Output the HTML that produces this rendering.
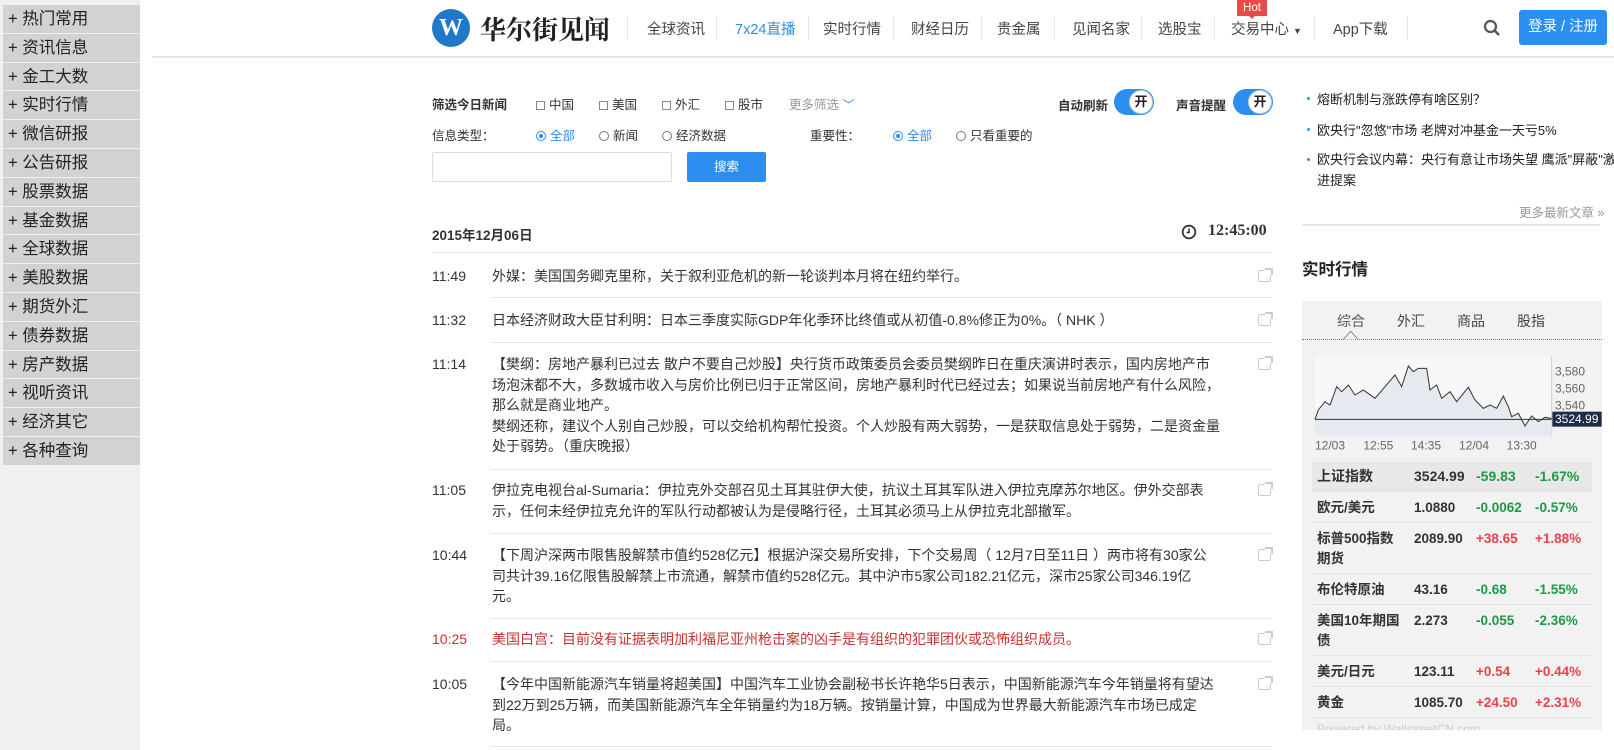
<!DOCTYPE html>
<html><head><meta charset="utf-8">
<style>
*{margin:0;padding:0;box-sizing:border-box}
body{width:1614px;height:750px;overflow:hidden;background:#fff;font-family:"Liberation Sans","Noto Sans CJK SC",sans-serif;color:#333;font-size:13.5px;position:relative}
.a{position:absolute;white-space:nowrap}
#side{position:absolute;left:0;top:0;width:140px;height:750px;background:#f0f0f0}
#side div{position:absolute;left:3px;width:137px;height:27.8px;background:#d2d2d2;font-size:16.5px;line-height:28px;padding-left:5px;color:#222}
.nav{position:absolute;top:18px;font-size:14.5px;color:#444}
.sep{position:absolute;top:16px;width:1px;height:24px;background:#e6e6e6}
.cb{display:inline-block;width:9px;height:9px;border:1px solid #888;margin-right:4px;vertical-align:-1px}
.rd{display:inline-block;width:10px;height:10px;border:1px solid #777;border-radius:50%;margin-right:4px;vertical-align:-1px;position:relative}
.rd.on{border-color:#2b8ef0}
.rd.on:after{content:"";position:absolute;left:2px;top:2px;width:4px;height:4px;border-radius:50%;background:#2b8ef0}
.tg{position:absolute;width:40px;height:26px;border-radius:13px;background:#2b8ef0}
.tg span{position:absolute;right:1px;top:1px;width:24px;height:24px;border-radius:50%;background:#fff;border:1px solid #ccc;font-size:13px;text-align:center;line-height:22px;color:#222;font-weight:bold}
.ni{position:absolute;left:432px;width:840px;line-height:20.6px;font-size:14px}
.ni .t{position:absolute;left:0;top:0}
.ni .c{position:absolute;left:60px;width:730px;white-space:normal}
.hl{position:absolute;left:491px;width:781px;height:1px;background:#e8e8e8}
.sh{position:absolute;left:1258px;width:13px;height:12px;border:1px solid #ccc;border-radius:2px}
.sh:after{content:"";position:absolute;right:-3px;top:-3px;width:6px;height:5px;border-top:2px solid #ccc;border-right:2px solid #ccc;background:#fff}
.rl{position:absolute;left:1317px;font-size:13px;color:#222}
.rl:before{content:"";position:absolute;left:-10px;top:8px;width:3px;height:3px;background:#3a8ee6;border-radius:50%}
.tr{position:absolute;left:1312px;width:280px;border-bottom:1px solid #e3e3e3;font-size:13.5px;font-weight:bold;color:#333;line-height:17px}
.tr span{position:absolute}
.g{color:#1d9a45}.r{color:#e8434a}
</style></head><body>
<div id="side">
<div style="top:5px">+ 热门常用</div><div style="top:33.8px">+ 资讯信息</div><div style="top:62.6px">+ 金工大数</div><div style="top:91.4px">+ 实时行情</div><div style="top:120.2px">+ 微信研报</div><div style="top:149px">+ 公告研报</div><div style="top:177.8px">+ 股票数据</div><div style="top:206.6px">+ 基金数据</div><div style="top:235.4px">+ 全球数据</div><div style="top:264.2px">+ 美股数据</div><div style="top:293px">+ 期货外汇</div><div style="top:321.8px">+ 债券数据</div><div style="top:350.6px">+ 房产数据</div><div style="top:379.4px">+ 视听资讯</div><div style="top:408.2px">+ 经济其它</div><div style="top:437px">+ 各种查询</div>
</div>
<div class="a" style="left:152px;top:56px;width:1462px;height:2px;background:#e6e6e6"></div>
<div class="a" style="left:432px;top:9px;width:38px;height:38px;border-radius:50%;background:#1f78c8;color:#fff;font-family:'Liberation Serif',serif;font-weight:bold;font-size:24px;text-align:center;line-height:38px">W</div>
<div class="a" style="left:480px;top:10px;font-family:'Liberation Serif','Noto Serif CJK SC',serif;font-weight:bold;font-size:26px;color:#222">华尔街见闻</div>
<div class="sep" style="left:627px"></div>
<div class="nav" style="left:647px">全球资讯</div><div class="sep" style="left:716px"></div>
<div class="nav" style="left:735px;color:#2e8ee6">7x24直播</div><div class="sep" style="left:808px"></div>
<div class="nav" style="left:823px">实时行情</div><div class="sep" style="left:893px"></div>
<div class="nav" style="left:911px">财经日历</div><div class="sep" style="left:981px"></div>
<div class="nav" style="left:997px">贵金属</div><div class="sep" style="left:1054px"></div>
<div class="nav" style="left:1072px">见闻名家</div><div class="sep" style="left:1141px"></div>
<div class="nav" style="left:1158px">选股宝</div><div class="sep" style="left:1214px"></div>
<div class="nav" style="left:1231px">交易中心 <span style="font-size:9px">▼</span></div><div class="sep" style="left:1314px"></div>
<div class="a" style="left:1237px;top:0;width:30px;height:16px;background:#e84a4a;color:#fff;font-size:11.5px;text-align:center;line-height:16px">Hot</div>
<div class="a" style="left:1248px;top:15px;border:4px solid transparent;border-top-color:#e84a4a"></div>
<div class="nav" style="left:1333px">App下载</div><div class="sep" style="left:1407px"></div>
<svg class="a" style="left:1483px;top:19px" width="18" height="18"><circle cx="7.5" cy="7.5" r="5.5" fill="none" stroke="#555" stroke-width="2.2"/><line x1="11.5" y1="11.5" x2="16" y2="16" stroke="#555" stroke-width="2.6"/></svg>
<div class="a" style="left:1519px;top:10px;width:88px;height:35px;background:#2b8ef0;border-radius:3px;color:#fff;font-size:14.5px;text-align:center;line-height:35px">登录 / 注册</div>
<div class="a" style="left:432px;top:94px;font-weight:bold;font-size:12.5px">筛选今日新闻</div>
<div class="a" style="left:536px;top:94px;font-size:12.5px"><i class="cb"></i>中国</div>
<div class="a" style="left:599px;top:94px;font-size:12.5px"><i class="cb"></i>美国</div>
<div class="a" style="left:662px;top:94px;font-size:12.5px"><i class="cb"></i>外汇</div>
<div class="a" style="left:725px;top:94px;font-size:12.5px"><i class="cb"></i>股市</div>
<div class="a" style="left:789px;top:94px;font-size:12.5px;color:#999">更多筛选 <span style="color:#2b8ef0;font-size:12px">﹀</span></div>
<div class="a" style="left:1058px;top:95px;font-weight:bold;font-size:12.5px">自动刷新</div>
<div class="tg" style="left:1114px;top:89px"><span>开</span></div>
<div class="a" style="left:1176px;top:95px;font-weight:bold;font-size:12.5px">声音提醒</div>
<div class="tg" style="left:1233px;top:89px"><span>开</span></div>
<div class="a" style="left:432px;top:125px;font-size:12.5px">信息类型：</div>
<div class="a" style="left:536px;top:125px;font-size:12.5px;color:#2b8ef0"><i class="rd on"></i>全部</div>
<div class="a" style="left:599px;top:125px;font-size:12.5px"><i class="rd"></i>新闻</div>
<div class="a" style="left:662px;top:125px;font-size:12.5px"><i class="rd"></i>经济数据</div>
<div class="a" style="left:810px;top:125px;font-size:12.5px">重要性：</div>
<div class="a" style="left:893px;top:125px;font-size:12.5px;color:#2b8ef0"><i class="rd on"></i>全部</div>
<div class="a" style="left:956px;top:125px;font-size:12.5px"><i class="rd"></i>只看重要的</div>
<div class="a" style="left:432px;top:152px;width:240px;height:30px;border:1px solid #ddd;border-radius:2px"></div>
<div class="a" style="left:687px;top:152px;width:79px;height:30px;background:#2b8ef0;border-radius:2px;color:#fff;font-size:12.5px;text-align:center;line-height:30px">搜索</div>
<div class="a" style="left:432px;top:224px;font-weight:bold;font-size:13.5px">2015年12月06日</div>
<svg class="a" style="left:1181px;top:224px" width="16" height="16"><circle cx="8" cy="8" r="6.3" fill="none" stroke="#333" stroke-width="1.8"/><path d="M8 4.5V8.5H5.5" fill="none" stroke="#333" stroke-width="1.6"/></svg>
<div class="a" style="left:1208px;top:222px;font-weight:bold;font-size:16px;font-family:'Liberation Serif',serif">12:45:00</div>
<div class="a" style="left:432px;top:252px;width:840px;height:1px;background:#e3e3e3"></div>
<div class="ni" style="top:266px"><span class="t">11:49</span><div class="c">外媒：美国国务卿克里称，关于叙利亚危机的新一轮谈判本月将在纽约举行。</div></div>
<div class="sh" style="top:270px"></div><div class="hl" style="top:297px"></div>
<div class="ni" style="top:310px"><span class="t">11:32</span><div class="c">日本经济财政大臣甘利明：日本三季度实际GDP年化季环比终值或从初值-0.8%修正为0%。（ NHK ）</div></div>
<div class="sh" style="top:314px"></div><div class="hl" style="top:342px"></div>
<div class="ni" style="top:354px"><span class="t">11:14</span><div class="c">【樊纲：房地产暴利已过去 散户不要自己炒股】央行货币政策委员会委员樊纲昨日在重庆演讲时表示，国内房地产市场泡沫都不大，多数城市收入与房价比例已归于正常区间，房地产暴利时代已经过去；如果说当前房地产有什么风险，那么就是商业地产。<br>樊纲还称，建议个人别自己炒股，可以交给机构帮忙投资。个人炒股有两大弱势，一是获取信息处于弱势，二是资金量处于弱势。（重庆晚报）</div></div>
<div class="sh" style="top:358px"></div><div class="hl" style="top:469px"></div>
<div class="ni" style="top:480px"><span class="t">11:05</span><div class="c">伊拉克电视台al-Sumaria：伊拉克外交部召见土耳其驻伊大使，抗议土耳其军队进入伊拉克摩苏尔地区。伊外交部表示，任何未经伊拉克允许的军队行动都被认为是侵略行径，土耳其必须马上从伊拉克北部撤军。</div></div>
<div class="sh" style="top:484px"></div><div class="hl" style="top:533px"></div>
<div class="ni" style="top:545px"><span class="t">10:44</span><div class="c">【下周沪深两市限售股解禁市值约528亿元】根据沪深交易所安排，下个交易周（ 12月7日至11日 ）两市将有30家公<br>司共计39.16亿限售股解禁上市流通，解禁市值约528亿元。其中沪市5家公司182.21亿元，深市25家公司346.19亿<br>元。</div></div>
<div class="sh" style="top:549px"></div><div class="hl" style="top:618px"></div>
<div class="ni" style="top:629px;color:#c8312f"><span class="t">10:25</span><div class="c">美国白宫：目前没有证据表明加利福尼亚州枪击案的凶手是有组织的犯罪团伙或恐怖组织成员。</div></div>
<div class="sh" style="top:633px"></div><div class="hl" style="top:661px"></div>
<div class="ni" style="top:674px"><span class="t">10:05</span><div class="c">【今年中国新能源汽车销量将超美国】中国汽车工业协会副秘书长许艳华5日表示，中国新能源汽车今年销量将有望达到22万到25万辆，而美国新能源汽车全年销量约为18万辆。按销量计算，中国成为世界最大新能源汽车市场已成定局。</div></div>
<div class="sh" style="top:678px"></div><div class="hl" style="top:746px"></div>
<div class="rl" style="top:89px">熔断机制与涨跌停有啥区别？</div>
<div class="rl" style="top:120px">欧央行"忽悠"市场 老牌对冲基金一天亏5%</div>
<div class="rl" style="top:150px;white-space:normal;width:300px;line-height:20.6px">欧央行会议内幕：央行有意让市场失望 鹰派"屏蔽"激进提案</div>
<div class="a" style="left:1519px;top:202px;font-size:12.5px;color:#999">更多最新文章 »</div>
<div class="a" style="left:1302px;top:224px;width:298px;height:2px;background:#e6e6e6"></div>
<div class="a" style="left:1302px;top:256px;font-size:16.5px;font-weight:bold;color:#222">实时行情</div>
<div class="a" style="left:1302px;top:301px;width:300px;height:429px;background:#f2f2f2"></div>
<div class="a" style="left:1337px;top:311px;font-size:14px;color:#555">综合</div>
<div class="a" style="left:1397px;top:311px;font-size:14px;color:#444">外汇</div>
<div class="a" style="left:1457px;top:311px;font-size:14px;color:#444">商品</div>
<div class="a" style="left:1517px;top:311px;font-size:14px;color:#444">股指</div>
<div class="a" style="left:1302px;top:339px;width:300px;border-top:1px dotted #777"></div>
<svg class="a" style="left:1250px;top:280px" width="364" height="470" viewBox="0 0 1092 1410">
<path d="M280 178 L302 154 L324 178" fill="#f2f2f2" stroke="#888" stroke-width="3"/>
<rect x="195" y="230" width="710" height="240" fill="#f8f8f8"/>
<line x1="905" y1="230" x2="905" y2="470" stroke="#ccc" stroke-width="3"/>
<path d="M195 418 L205 390 L225 365 L240 375 L260 320 L275 335 L295 315 L315 345 L340 330 L375 355 L405 320 L435 285 L455 320 L475 258 L490 275 L505 265 L530 265 L540 330 L560 315 L575 355 L600 335 L620 365 L655 322 L675 360 L700 385 L720 375 L740 385 L760 348 L775 380 L785 410 L805 400 L825 438 L845 408 L865 425 L885 412 L905 415 L905 470 L195 470Z" fill="#e6e9f0"/>
<path d="M195 418 L205 390 L225 365 L240 375 L260 320 L275 335 L295 315 L315 345 L340 330 L375 355 L405 320 L435 285 L455 320 L475 258 L490 275 L505 265 L530 265 L540 330 L560 315 L575 355 L600 335 L620 365 L655 322 L675 360 L700 385 L720 375 L740 385 L760 348 L775 380 L785 410 L805 400 L825 438 L845 408 L865 425 L885 412 L905 415" fill="none" stroke="#333" stroke-width="3"/>
<line x1="195" y1="418" x2="905" y2="418" stroke="#333" stroke-width="3"/>
<g font-family="Liberation Sans,sans-serif" font-size="36" fill="#666"><text x="915" y="286">3,580</text><text x="915" y="337">3,560</text><text x="915" y="388">3,540</text>
<text x="195" y="508">12/03</text><text x="340" y="508">12:55</text><text x="483" y="508">14:35</text><text x="627" y="508">12/04</text><text x="770" y="508">13:30</text></g>
<rect x="907" y="395" width="148" height="45" fill="#1e2d45"/>
<text x="915" y="429" font-family="Liberation Sans,sans-serif" font-size="36" fill="#fff">3524.99</text>
</svg>
<div class="tr" style="top:462px;height:30px;background:#e8e8e8;font-size:14px"><span style="left:5px;top:6px">上证指数</span><span style="left:102px;top:6px">3524.99</span><span class="g" style="left:164px;top:6px">-59.83</span><span class="g" style="left:223px;top:6px">-1.67%</span></div>
<div class="tr" style="top:492px;height:31px"><span style="left:5px;top:7px">欧元/美元</span><span style="left:102px;top:7px">1.0880</span><span class="g" style="left:164px;top:7px">-0.0062</span><span class="g" style="left:223px;top:7px">-0.57%</span></div>
<div class="tr" style="top:523px;height:51px"><span style="left:5px;top:6px;white-space:normal;width:90px;line-height:20px">标普500指数期货</span><span style="left:102px;top:7px">2089.90</span><span class="r" style="left:164px;top:7px">+38.65</span><span class="r" style="left:223px;top:7px">+1.88%</span></div>
<div class="tr" style="top:574px;height:31px"><span style="left:5px;top:7px">布伦特原油</span><span style="left:102px;top:7px">43.16</span><span class="g" style="left:164px;top:7px">-0.68</span><span class="g" style="left:223px;top:7px">-1.55%</span></div>
<div class="tr" style="top:605px;height:51px"><span style="left:5px;top:6px;white-space:normal;width:90px;line-height:20px">美国10年期国债</span><span style="left:102px;top:7px">2.273</span><span class="g" style="left:164px;top:7px">-0.055</span><span class="g" style="left:223px;top:7px">-2.36%</span></div>
<div class="tr" style="top:656px;height:31px"><span style="left:5px;top:7px">美元/日元</span><span style="left:102px;top:7px">123.11</span><span class="r" style="left:164px;top:7px">+0.54</span><span class="r" style="left:223px;top:7px">+0.44%</span></div>
<div class="tr" style="top:687px;height:31px"><span style="left:5px;top:7px">黄金</span><span style="left:102px;top:7px">1085.70</span><span class="r" style="left:164px;top:7px">+24.50</span><span class="r" style="left:223px;top:7px">+2.31%</span></div>
<div class="a" style="left:1317px;top:722px;font-size:12px;color:#ccc;height:8px;overflow:hidden;line-height:14px">Powered by WallstreetCN.com</div>
</body></html>
